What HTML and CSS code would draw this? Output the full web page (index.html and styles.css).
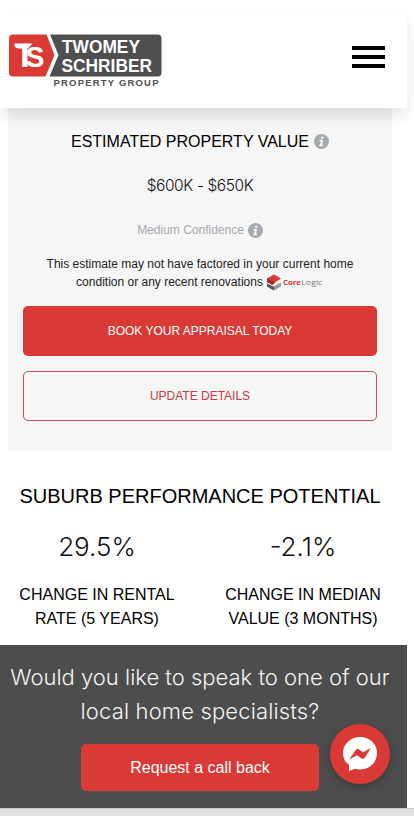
FILE: index.html
```
<!DOCTYPE html>
<html lang="en">
<head>
<meta charset="utf-8">
<title>Twomey Schriber Property Group</title>
<link rel="stylesheet" href="styles.css">
</head>
<body>
<div class="page">
  <header class="header">
    <svg class="logo" width="156" height="56" viewBox="8 33 156 56">
      <path fill="#da3a35" d="M13 34.500h33.500l8 20.500-9 21.500H13a4 4 0 0 1-4-4v-34a4 4 0 0 1 4-4z"/>
      <path fill="#4f4f50" d="M50 34.500h107.500a4 4 0 0 1 4 4v34a4 4 0 0 1-4 4H49.500l9-21.500z"/>
      <path fill="#fff" d="M14.500 43.500h18l-4 4.500h-1V67h-5.300V48.500h-4a4 4 0 0 1-3.700-2.500z"/>
      <text class="logo-s" x="25.500" y="67" textLength="19" lengthAdjust="spacingAndGlyphs">S</text>
      <text class="logo-name" x="62" y="52.500" textLength="78" lengthAdjust="spacingAndGlyphs">TWOMEY</text>
      <text class="logo-name" x="61.500" y="71.700" textLength="90.500" lengthAdjust="spacingAndGlyphs">SCHRIBER</text>
      <text class="logo-sub" x="53.500" y="86" textLength="105">PROPERTY GROUP</text>
    </svg>
    <div class="burger"><span></span><span></span><span></span></div>
  </header>

  <section class="card">
    <h2 class="card-title"><span>ESTIMATED PROPERTY VALUE</span>
      <svg class="info" viewBox="0 0 16 16"><circle cx="8" cy="8" r="8"/><path d="M7.800 2.800h2.600l-.5 2.300H7.300zM5.900 6.500h3.800l-1 4.900h1.200l-.3 1.600H5.400l.3-1.600h.8l.7-3.300H5.600z"/></svg>
    </h2>
    <p class="price">$600K - $650K</p>
    <p class="confidence"><span>Medium Confidence</span>
      <svg class="info" viewBox="0 0 16 16"><circle cx="8" cy="8" r="8"/><path d="M7.800 2.800h2.600l-.5 2.300H7.300zM5.900 6.500h3.800l-1 4.900h1.200l-.3 1.600H5.400l.3-1.600h.8l.7-3.300H5.600z"/></svg>
    </p>
    <div class="note">
      <p class="note-a">This estimate may not have factored in your current home</p>
      <p class="note-b"><span>condition or any recent renovations</span>
        <svg class="corelogic" width="57" height="17" viewBox="0 0 57 17">
          <path fill="#da3a35" d="M0 4.500L7 .500l7 4L8 8.500 5.500 11 0 8z"/>
          <path fill="#9b2b2b" d="M0 4.500L8 8.500 5.500 11 0 8z"/>
          <path fill="#9a9c9e" d="M0 9.500l6 3L14 8.500v4l-7 4-7-4z"/>
          <path fill="#55585a" d="M0 9.500l7 3.500v3.500l-7-4z"/>
          <text x="16" y="10.500" textLength="18" lengthAdjust="spacingAndGlyphs" class="core">Core</text>
          <text x="34.300" y="10.500" textLength="21" lengthAdjust="spacingAndGlyphs" class="logic">Logic</text>
        </svg>
      </p>
    </div>
    <a class="btn btn-solid">BOOK YOUR APPRAISAL TODAY</a>
    <a class="btn btn-line">UPDATE DETAILS</a>
  </section>

  <section class="suburb">
    <h2 class="suburb-title">SUBURB PERFORMANCE POTENTIAL</h2>
    <div class="stats">
      <div class="stat"><div class="num">29.5%</div><p>CHANGE IN RENTAL<br>RATE (5 YEARS)</p></div>
      <div class="stat"><div class="num">-2.1%</div><p>CHANGE IN MEDIAN<br>VALUE (3 MONTHS)</p></div>
    </div>
  </section>

  <section class="callout">
    <p class="ask">Would you like to speak to one of our<br><span class="ask-b">local home specialists?</span></p>
    <a class="call">Request a call back</a>
    <div class="chat">
      <svg width="36" height="36" viewBox="0 0 36 36">
        <path fill="#fff" d="M18 1C8.500 1 1 8 1 17c0 5 2 9 6 11.800V35l6-2.200c1.600.500 3.300.700 5 .700 9.500 0 17-7 17-16.500S27.500 1 18 1z"/>
        <path fill="#da3a35" d="M7.300 23.500l6.200-9.300c.9-1.300 2.400-1.500 3.600-.7l4 2.700 7.800-4.200-6 9.500c-.9 1.300-2.400 1.600-3.700.7l-4.200-3z"/>
      </svg>
    </div>
  </section>
</div>
<div class="bottom"></div>
</body>
</html>
```
FILE: styles.css
```
* { box-sizing: border-box; }
body { margin: 0; height: 816px; overflow: hidden; background: #fff; color: #111; font-family: "Liberation Sans", Arial, sans-serif; }
p, h2 { margin: 0; font-weight: 400; }
.page { width: 407px; height: 808px; padding-top: 12px; display: flex; flex-direction: column; }
.header { position: relative; z-index: 2; height: 96px; flex: none; display: flex; justify-content: space-between; align-items: flex-start; padding: 21px 22px 0 8px; background: #fff; box-shadow: 0 8px 16px -2px rgba(0,0,0,.13); }
.logo { display: block; }
.logo-s { font-size: 30px; font-weight: 700; fill: #fff; }
.logo-name { font-size: 18.500px; font-weight: 700; fill: #fff; }
.logo-sub { font-size: 9.500px; font-weight: 700; fill: #4f4f50; }
.burger { width: 33px; margin-top: 13px; display: flex; flex-direction: column; gap: 5.500px; }
.burger span { height: 3.500px; background: #000; }

.card { width: 384px; height: 343px; margin-left: 8px; padding: 20px 15px 0; background: #f6f6f6; text-align: center; display: flex; flex-direction: column; flex: none; white-space: nowrap; }
.card-title { display: flex; justify-content: center; align-items: center; gap: 5px; height: 27px; font-size: 16px; color: #000; }
.info { width: 15px; height: 15px; fill: #a4a9af; flex: none; }
.info path { fill: #f6f6f6; }
.price { margin-top: 19px; height: 22px; line-height: 23px; font-family: Inter, sans-serif; font-weight: 300; font-size: 15.500px; letter-spacing: -.4px; }
.confidence { display: flex; justify-content: center; align-items: center; gap: 4px; margin-top: 24px; height: 20px; font-size: 12px; color: #a5a9ae; }
.note { margin-top: 15px; font-size: 12px; line-height: 18px; color: #222; }
.note-b { display: flex; justify-content: center; align-items: center; gap: 4px; height: 18px; }
.core { font: 700 7.500px "Open Sans", sans-serif; fill: #da3a35; }
.logic { font: 400 7.500px "Open Sans", sans-serif; fill: #77797b; }
.btn { display: flex; align-items: center; justify-content: center; height: 50px; border-radius: 5px; font-size: 12px; flex: none; }
.btn-solid { margin-top: 15px; background: #da3a35; color: #fff; }
.btn-line { margin-top: 15px; border: 1px solid #cf4a52; color: #c93b42; }

.suburb { width: 400px; height: 194px; padding-top: 31px; flex: none; text-align: center; white-space: nowrap; }
.suburb-title { font-size: 20px; line-height: 28px; color: #000; }
.stats { display: flex; justify-content: space-between; padding: 0 19px; }
.stat { width: 156px; }
.num { margin-top: 21px; height: 32px; line-height: 32px; font-family: Inter, sans-serif; font-weight: 300; font-size: 26px; }
.stat p { margin: 20px -10px 0; font-size: 16px; line-height: 24px; color: #000; }

.callout { position: relative; height: 163px; flex: none; padding: 15px 14px 0 7px; background: #4d4d4d; color: #fff; display: flex; flex-direction: column; align-items: center; text-align: center; white-space: nowrap; }
.ask { font-family: Inter, sans-serif; font-weight: 300; font-size: 22px; line-height: 34px; color: #f3f3f3; }
.ask-b { letter-spacing: .15px; }
.call { display: flex; align-items: center; justify-content: center; width: 238px; height: 47px; margin-top: 16px; padding-top: 1px; border-radius: 5px; background: #da3a35; font-size: 16px; }
.chat { position: absolute; left: 330px; top: 79px; width: 60px; height: 60px; border-radius: 50%; background: #da3a35; box-shadow: 0 3px 8px rgba(0,0,0,.25); display: flex; align-items: center; justify-content: center; }
.bottom { height: 8px; background: #e4e4e4; border-top: 1px solid #c8c8c8; }
```
